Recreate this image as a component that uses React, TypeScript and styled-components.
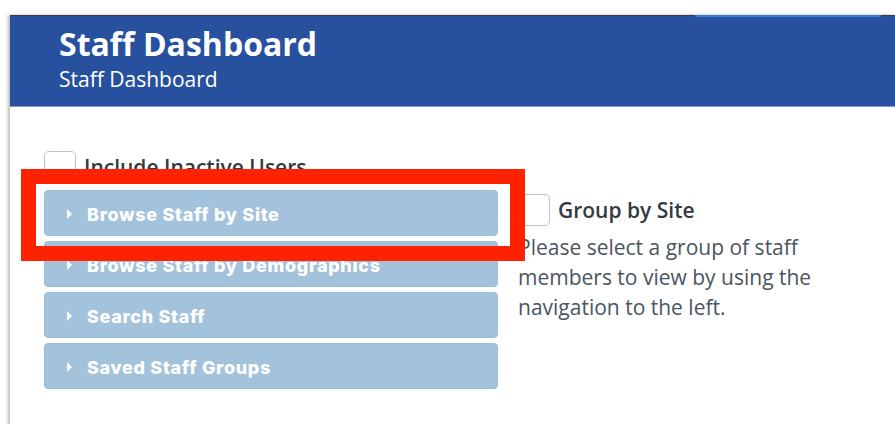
import React from "react";
import styled, { createGlobalStyle } from "styled-components";

const GlobalStyle = createGlobalStyle`
  html, body {
    margin: 0;
    padding: 0;
    background: #ffffff;
    font-family: "Open Sans", "Liberation Sans", sans-serif;
  }
`;

const Frame = styled.div`
  padding-top: 15px;
  height: 424px;
  box-sizing: border-box;
  overflow: hidden;
`;

const Window = styled.div`
  position: relative;
  margin-left: 10px;
  height: 409px;
  border-top: 1px solid #3b3b3b;
  box-shadow: -2px 0 3px rgba(0, 0, 0, 0.28);
  background: #ffffff;

  /* active tab indicator sitting on the top edge */
  &::before {
    content: "";
    position: absolute;
    top: -1px;
    left: 685px;
    width: 186px;
    height: 2px;
    background: #3a7ad8;
  }
`;

const Header = styled.header`
  height: 91px;
  box-sizing: border-box;
  background: #27519e;
  border-bottom: 1px solid #7e9bd0;
  padding: 8px 0 0 49px;
  color: #ffffff;
`;

const Title = styled.h1`
  margin: 0;
  font-size: 32px;
  line-height: 40px;
  font-weight: 700;
`;

const Subtitle = styled.div`
  font-size: 21px;
  line-height: 30px;
  font-weight: 400;
`;

const Body = styled.main`
  display: flex;
  gap: 20px;
  padding: 44px 0 0 34px;
`;

const LeftColumn = styled.section`
  position: relative;
  width: 454px;
`;

const RightColumn = styled.section`
  width: 320px;
  padding-top: 43px;
`;

const CheckRow = styled.label`
  display: flex;
  align-items: center;
  gap: 8px;
  color: #333a40;
  font-size: 21px;
  font-weight: 600;
`;

const Box = styled.span`
  width: 32px;
  height: 32px;
  box-sizing: border-box;
  border: 1px solid #b9c2cf;
  border-radius: 5px;
  background: #ffffff;
  flex: none;
`;

const Accordion = styled.ul`
  list-style: none;
  margin: 7px 0 0;
  padding: 0;
  display: flex;
  flex-direction: column;
  gap: 5px;
`;

const Panel = styled.li`
  height: 46px;
  box-sizing: border-box;
  display: flex;
  align-items: center;
  gap: 15px;
  padding: 2px 0 0 22px;
  background: #a3c2dc;
  border: 1px solid #9dbcd6;
  border-radius: 4px;
  color: #ffffff;
  font-family: Inter, "Open Sans", sans-serif;
  font-size: 18px;
  font-weight: 800;
  letter-spacing: 0.7px;
`;

const Caret = styled.span`
  width: 0;
  height: 0;
  border-top: 5px solid transparent;
  border-bottom: 5px solid transparent;
  border-left: 5px solid #ffffff;
`;

const Callout = styled.div`
  position: absolute;
  left: -23px;
  top: 18px;
  width: 504px;
  height: 92px;
  box-sizing: border-box;
  border: 15px solid #ff2200;
  pointer-events: none;
`;

const Hint = styled.p`
  margin: 6px 0 0;
  color: #4a5560;
  font-size: 21px;
  line-height: 30px;
`;

const panels = [
  "Browse Staff by Site",
  "Browse Staff by Demographics",
  "Search Staff",
  "Saved Staff Groups",
];

export default function App() {
  return (
    <>
      <GlobalStyle />
      <Frame>
        <Window>
          <Header>
            <Title>Staff Dashboard</Title>
            <Subtitle>Staff Dashboard</Subtitle>
          </Header>
          <Body>
            <LeftColumn>
              <CheckRow>
                <Box />
                Include Inactive Users
              </CheckRow>
              <Accordion>
                {panels.map((label) => (
                  <Panel key={label}>
                    <Caret />
                    {label}
                  </Panel>
                ))}
              </Accordion>
              <Callout />
            </LeftColumn>
            <RightColumn>
              <CheckRow>
                <Box />
                Group by Site
              </CheckRow>
              <Hint>
                Please select a group of staff members to view by using the
                navigation to the left.
              </Hint>
            </RightColumn>
          </Body>
        </Window>
      </Frame>
    </>
  );
}
